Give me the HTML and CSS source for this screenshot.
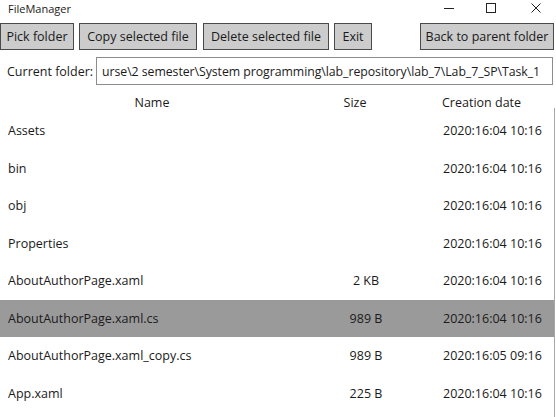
FILE: index.html
```html
<!DOCTYPE html>
<html>
<head>
<meta charset="utf-8">
<title>FileManager</title>
<link rel="stylesheet" href="styles.css">
</head>
<body>
<div class="window">
  <div class="titlebar">
    <span class="title">FileManager</span>
    <div class="controls">
      <svg class="ctl min" width="12" height="12" viewBox="0 0 12 12"><path d="M1 6.5h10" stroke="#222" stroke-width="1"/></svg>
      <svg class="ctl max" width="12" height="12" viewBox="0 0 12 12"><rect x="1.5" y="1.5" width="9" height="9" fill="none" stroke="#222" stroke-width="1"/></svg>
      <svg class="ctl close" width="12" height="12" viewBox="0 0 12 12"><path d="M1.5 1.5l9 9M10.5 1.5l-9 9" stroke="#222" stroke-width="1"/></svg>
    </div>
  </div>
  <div class="toolbar">
    <button class="btn b-pick">Pick folder</button>
    <button class="btn b-copy">Copy selected file</button>
    <button class="btn b-del">Delete selected file</button>
    <button class="btn b-exit">Exit</button>
    <span class="spacer"></span>
    <button class="btn b-back">Back to parent folder</button>
  </div>
  <div class="pathrow">
    <span class="label">Current folder:</span>
    <div class="pathbox"><span class="pathtext">urse\2 semester\System programming\lab_repository\lab_7\Lab_7_SP\Task_1</span></div>
  </div>
  <div class="header">
    <span class="h-name">Name</span>
    <span class="h-size">Size</span>
    <span class="h-date">Creation date</span>
  </div>
  <div class="list">
    <div class="rows">
      <div class="row"><span class="c-name">Assets</span><span class="c-size"></span><span class="c-date">2020:16:04 10:16</span></div>
      <div class="row"><span class="c-name">bin</span><span class="c-size"></span><span class="c-date">2020:16:04 10:16</span></div>
      <div class="row"><span class="c-name">obj</span><span class="c-size"></span><span class="c-date">2020:16:04 10:16</span></div>
      <div class="row"><span class="c-name">Properties</span><span class="c-size"></span><span class="c-date">2020:16:04 10:16</span></div>
      <div class="row"><span class="c-name">AboutAuthorPage.xaml</span><span class="c-size">2 KB</span><span class="c-date">2020:16:04 10:16</span></div>
      <div class="row selected"><span class="c-name">AboutAuthorPage.xaml.cs</span><span class="c-size">989 B</span><span class="c-date">2020:16:04 10:16</span></div>
      <div class="row"><span class="c-name">AboutAuthorPage.xaml_copy.cs</span><span class="c-size">989 B</span><span class="c-date">2020:16:05 09:16</span></div>
      <div class="row"><span class="c-name">App.xaml</span><span class="c-size">225 B</span><span class="c-date">2020:16:04 10:16</span></div>
    </div>
    <div class="scrollline"></div>
  </div>
</div>
</body>
</html>
```
FILE: styles.css
```css
html, body {
  margin: 0;
  padding: 0;
  background: #ffffff;
  overflow: hidden;
}
body {
  font-family: "Open Sans", "Noto Sans", "Liberation Sans", sans-serif;
  color: #1a1a1a;
  width: 556px;
  height: 417px;
}
.window {
  width: 556px;
  height: 417px;
  display: flex;
  flex-direction: column;
}
.titlebar {
  height: 18px;
  display: flex;
  align-items: center;
  justify-content: space-between;
}
.title {
  font-size: 11px;
  padding-left: 8px;
  margin-top: -2px;
}
.controls {
  display: flex;
  align-items: center;
  margin-top: -2px;
}
.ctl { display: block; }
.min { margin-right: 30px; }
.max { margin-right: 33px; }
.close { margin-right: 14px; }

.toolbar {
  display: flex;
  height: 27px;
  margin-top: 5px;
  padding-right: 2px;
}
.btn {
  font-family: inherit;
  font-size: 12.5px;
  color: #1a1a1a;
  background: #cccccc;
  border: 1px solid #4a4a4a;
  padding: 0;
  height: 27px;
  display: flex;
  align-items: center;
  justify-content: center;
}
.b-pick { width: 74px; }
.b-copy { width: 118px; margin-left: 5px; }
.b-del { width: 126px; margin-left: 6px; }
.b-exit { width: 38px; margin-left: 5px; }
.spacer { flex: 1; }
.b-back { width: 134px; }

.pathrow {
  display: flex;
  align-items: center;
  height: 28px;
  margin-top: 7px;
  padding-right: 3px;
}
.label {
  font-size: 12.5px;
  padding-left: 7px;
  width: 89px;
  flex-shrink: 0;
  white-space: nowrap;
}
.pathbox {
  flex: 1;
  min-width: 0;
  height: 26px;
  border: 1px solid #8c8c8c;
  display: flex;
  align-items: center;
  overflow: hidden;
  padding-left: 5px;
}
.pathtext {
  font-size: 12.3px;
  letter-spacing: -0.05px;
  white-space: nowrap;
}

.header {
  display: grid;
  grid-template-columns: 304px 102px 1fr;
  height: 20px;
  margin-top: 7px;
  align-items: center;
  font-size: 12.5px;
}
.h-name { text-align: center; }
.h-size { text-align: center; }
.h-date { padding-left: 36px; }

.list {
  flex: 1;
  display: flex;
}
.rows {
  flex: 1;
}
.scrollline {
  width: 1px;
  background: #a8a8a8;
  margin-top: -4px;
  margin-right: 1px;
}
.row {
  display: grid;
  grid-template-columns: 316px 100px 1fr;
  height: 37.5px;
  align-items: center;
  font-size: 12.5px;
}
.row.selected {
  background: #9a9a9a;
}
.c-name { padding-left: 8px; white-space: nowrap; }
.c-size { text-align: center; }
.c-date { padding-left: 27px; white-space: nowrap; }
```
